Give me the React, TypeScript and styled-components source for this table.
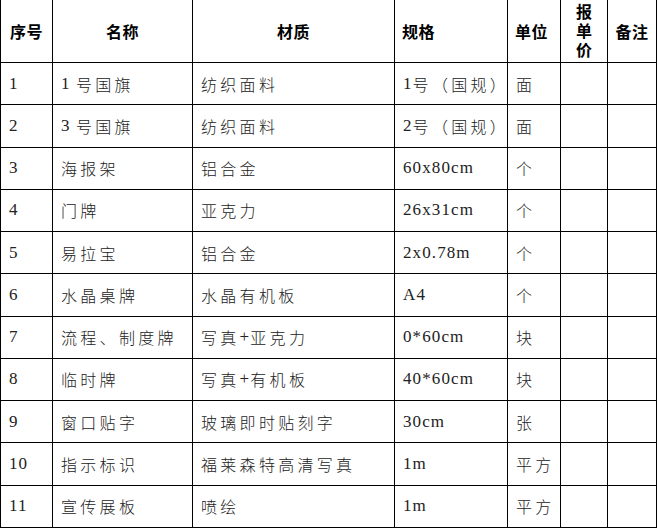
import React from "react";
import styled, { createGlobalStyle } from "styled-components";

const GlobalStyle = createGlobalStyle`
  html, body {
    margin: 0;
    padding: 0;
    background: #ffffff;
  }
`;

const Sheet = styled.div`
  display: grid;
  grid-template-columns: 52px 140px 202px 113px 53px 47px 49px;
  grid-template-rows: 63px repeat(11, 42.27px);
  width: max-content;
  border-left: 1px solid #000;
  background: #fff;
`;

const HeadCell = styled.div<{ $align?: "center" | "left" }>`
  box-sizing: border-box;
  display: flex;
  align-items: center;
  justify-content: ${(p) => (p.$align === "left" ? "flex-start" : "center")};
  padding-left: ${(p) => (p.$align === "left" ? "7px" : "0")};
  border-right: 1px solid #000;
  border-bottom: 1px solid #000;
  font-family: "Noto Sans CJK SC", "Noto Sans", sans-serif;
  font-weight: 700;
  font-size: 16px;
  letter-spacing: 0.5px;
  color: #000;
  white-space: nowrap;
`;

// 报单价 is squeezed into one char per line
const StackedLabel = styled.span`
  display: block;
  width: 16px;
  white-space: normal;
  word-break: break-all;
  letter-spacing: 0;
  line-height: 19px;
  margin-top: -1px;
`;

const Cell = styled.div`
  box-sizing: border-box;
  display: flex;
  align-items: center;
  padding-left: 8px;
  border-right: 1px solid #000;
  border-bottom: 1px solid #000;
  font-family: "Noto Sans CJK SC", "Noto Sans", sans-serif;
  font-weight: 300;
  font-size: 16px;
  letter-spacing: 3.3px;
  color: #222;
  white-space: pre;
  overflow: visible;
`;

const Latin = styled.span`
  font-family: "Liberation Serif", "DejaVu Serif", serif;
  font-size: 17px;
  letter-spacing: 1.1px;
`;

type Item = {
  no: string;
  name: string;
  material: string;
  spec: string;
  unit: string;
};

const items: Item[] = [
  { no: "1", name: "1 号国旗", material: "纺织面料", spec: "1号（国规）", unit: "面" },
  { no: "2", name: "3 号国旗", material: "纺织面料", spec: "2号（国规）", unit: "面" },
  { no: "3", name: "海报架", material: "铝合金", spec: "60x80cm", unit: "个" },
  { no: "4", name: "门牌", material: "亚克力", spec: "26x31cm", unit: "个" },
  { no: "5", name: "易拉宝", material: "铝合金", spec: "2x0.78m", unit: "个" },
  { no: "6", name: "水晶桌牌", material: "水晶有机板", spec: "A4", unit: "个" },
  { no: "7", name: "流程、制度牌", material: "写真+亚克力", spec: "0*60cm", unit: "块" },
  { no: "8", name: "临时牌", material: "写真+有机板", spec: "40*60cm", unit: "块" },
  { no: "9", name: "窗口贴字", material: "玻璃即时贴刻字", spec: "30cm", unit: "张" },
  { no: "10", name: "指示标识", material: "福莱森特高清写真", spec: "1m", unit: "平方" },
  { no: "11", name: "宣传展板", material: "喷绘", spec: "1m", unit: "平方" },
];

// ascii runs get the serif latin face, the rest stays CJK
function Mixed({ text }: { text: string }) {
  const parts = text.split(/([\x20-\x7E]+)/).filter((s) => s.length);
  return (
    <>
      {parts.map((part, i) =>
        /^[\x20-\x7E]+$/.test(part) ? (
          <Latin key={i}>{part}</Latin>
        ) : (
          <span key={i}>{part}</span>
        )
      )}
    </>
  );
}

export default function App() {
  return (
    <>
      <GlobalStyle />
      <Sheet>
        <HeadCell>序号</HeadCell>
        <HeadCell>名称</HeadCell>
        <HeadCell>材质</HeadCell>
        <HeadCell $align="left">规格</HeadCell>
        <HeadCell $align="left">单位</HeadCell>
        <HeadCell>
          <StackedLabel>报单价</StackedLabel>
        </HeadCell>
        <HeadCell>备注</HeadCell>

        {items.map((item) => (
          <React.Fragment key={item.no}>
            <Cell>
              <Mixed text={item.no} />
            </Cell>
            <Cell>
              <Mixed text={item.name} />
            </Cell>
            <Cell>
              <Mixed text={item.material} />
            </Cell>
            <Cell>
              <Mixed text={item.spec} />
            </Cell>
            <Cell>{item.unit}</Cell>
            <Cell />
            <Cell />
          </React.Fragment>
        ))}
      </Sheet>
    </>
  );
}
